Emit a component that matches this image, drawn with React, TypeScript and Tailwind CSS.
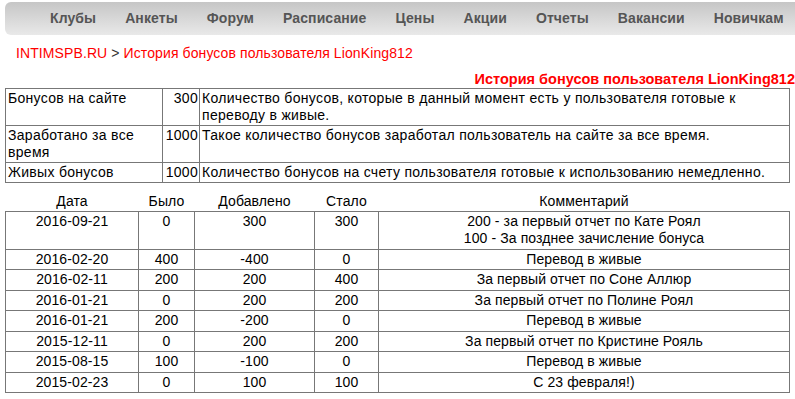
import React from "react";

const nav = ["Клубы", "Анкеты", "Форум", "Расписание", "Цены", "Акции", "Отчеты", "Вакансии", "Новичкам"];

const rows: [string, string, string, string, string[]][] = [
  ["2016-09-21", "0", "300", "300", ["200 - за первый отчет по Кате Роял", "100 - За позднее зачисление бонуса"]],
  ["2016-02-20", "400", "-400", "0", ["Перевод в живые"]],
  ["2016-02-11", "200", "200", "400", ["За первый отчет по Соне Аллюр"]],
  ["2016-01-21", "0", "200", "200", ["За первый отчет по Полине Роял"]],
  ["2016-01-21", "200", "-200", "0", ["Перевод в живые"]],
  ["2015-12-11", "0", "200", "200", ["За первый отчет по Кристине Рояль"]],
  ["2015-08-15", "100", "-100", "0", ["Перевод в живые"]],
  ["2015-02-23", "0", "100", "100", ["С 23 февраля!)"]],
];

export default function App() {
  const font = { fontFamily: '"Liberation Sans", Arial, sans-serif' };
  return (
    <div className="w-[795px] h-[399px] bg-white overflow-hidden text-black" style={font}>
      <div className="ml-[5px] mt-[2px] h-[33px] rounded-l-[6px] bg-gradient-to-b from-[#c6c6c6] to-[#e9e9e9] flex items-center gap-[29px] pl-[45px] whitespace-nowrap">
        {nav.map((n) => (
          <span key={n} className="text-[14px] font-bold text-[#555] tracking-[0.1px]">{n}</span>
        ))}
      </div>
      <div className="pl-[16px] pt-[10px] text-[14px] leading-[17px] text-[#f00] tracking-[0.1px]">
        INTIMSPB.RU <span className="text-[#333]">&gt;</span> История бонусов пользователя LionKing812
      </div>
      <div className="text-right text-[14.5px] font-bold text-[#f00] leading-[17px] mt-[9px]">
        История бонусов пользователя LionKing812
      </div>
      <table className="ml-[5px] w-[785px] border-collapse text-[14px] tracking-[0.3px] leading-[17px]">
        <tbody>
          <tr>
            <td className="border border-[#777] w-[157px] px-[2px] py-[1px] align-top">Бонусов на сайте</td>
            <td className="border border-[#777] w-[37px] px-[1px] py-[1px] align-top text-right">300</td>
            <td className="border border-[#777] px-[2px] py-[1px] align-top">Количество бонусов, которые в данный момент есть у пользователя готовые к<br />переводу в живые.</td>
          </tr>
          <tr>
            <td className="border border-[#777] px-[2px] py-[1px] align-top">Заработано за все время</td>
            <td className="border border-[#777] px-[1px] py-[1px] align-top text-right">1000</td>
            <td className="border border-[#777] px-[2px] py-[1px] align-top">Такое количество бонусов заработал пользователь на сайте за все время.<br />&nbsp;</td>
          </tr>
          <tr>
            <td className="border border-[#777] px-[2px] py-[1px] align-top">Живых бонусов</td>
            <td className="border border-[#777] px-[1px] py-[1px] align-top text-right">1000</td>
            <td className="border border-[#777] px-[2px] py-[1px] align-top">Количество бонусов на счету пользователя готовые к использованию немедленно.</td>
          </tr>
        </tbody>
      </table>
      <table className="ml-[5px] w-[785px] border-collapse text-[14px] tracking-[0.1px] leading-[17.5px] mt-[10px] text-center">
        <thead>
          <tr>
            <th className="font-normal w-[133px] py-0">Дата</th>
            <th className="font-normal w-[56px] py-0">Было</th>
            <th className="font-normal w-[120px] py-0">Добавлено</th>
            <th className="font-normal w-[64px] py-0">Стало</th>
            <th className="font-normal py-0">Комментарий</th>
          </tr>
        </thead>
        <tbody>
          {rows.map((r, i) => (
            <tr key={i}>
              <td className="border border-[#777] py-[1px] align-top">{r[0]}</td>
              <td className="border border-[#777] py-[1px] align-top">{r[1]}</td>
              <td className="border border-[#777] py-[1px] align-top">{r[2]}</td>
              <td className="border border-[#777] py-[1px] align-top">{r[3]}</td>
              <td className="border border-[#777] py-[1px] align-top">
                {r[4].map((c, j) => (
                  <div key={j}>{c}</div>
                ))}
              </td>
            </tr>
          ))}
        </tbody>
      </table>
    </div>
  );
}
